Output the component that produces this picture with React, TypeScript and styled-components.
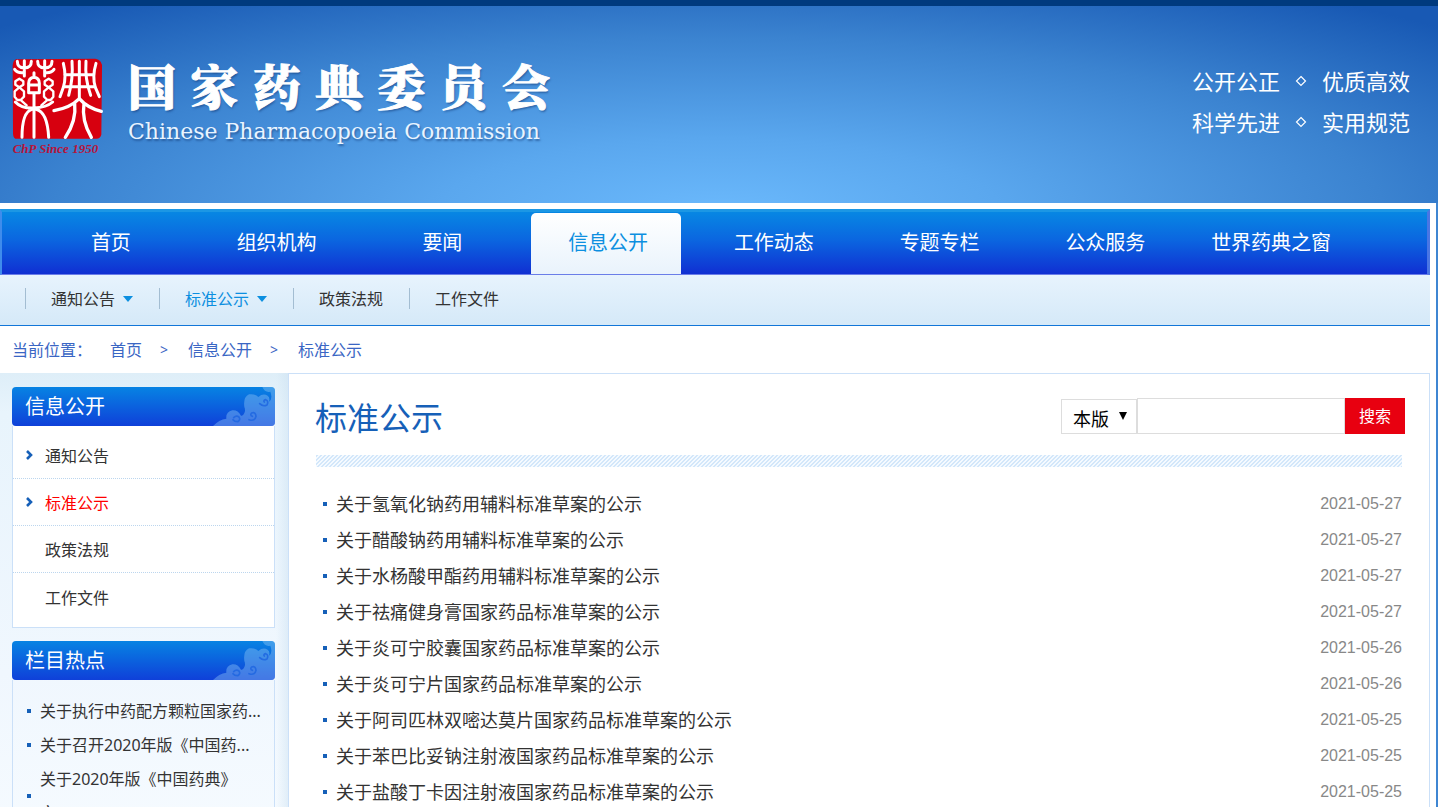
import React from "react";
import styled, { createGlobalStyle } from "styled-components";

const Global = createGlobalStyle`
  * { box-sizing: border-box; }
  body {
    margin: 0;
    height: 100vh;
    overflow: hidden;
    background: #3f86d2;
    color: #333;
    font: 16px/24px "Noto Sans", "Noto Sans CJK SC", sans-serif;
  }
  a { color: inherit; text-decoration: none; }
  ul, h1, h2, p { margin: 0; padding: 0; font-weight: 400; list-style: none; }
`;

const Banner = styled.header`
  display: flex;
  justify-content: space-between;
  align-items: center;
  height: 203px;
  padding: 0 28px 0 8px;
  border-top: 6px solid #003a7e;
  background: radial-gradient(ellipse 70% 135% at 50% 105%, #6bb9fc 0%, #5aa7ee 28%, #3b83d0 66%, #1859b4 100%);
`;

const Brand = styled.div`
  display: flex;
  align-items: flex-start;
  gap: 20px;
`;

const Names = styled.div`
  width: 422px;
  color: #fff;
  text-shadow: 1px 2px 2px rgba(20, 60, 120, 0.55);
`;

const SiteName = styled.h1`
  display: flex;
  justify-content: space-between;
  font: 900 48px/66px "Noto Serif CJK SC", "Noto Sans CJK SC", serif;
  -webkit-text-stroke: 1px #fff;
`;

const SiteNameEn = styled.p`
  font: 22px/28px "DejaVu Serif", serif;
  white-space: nowrap;
  color: #e9f4ff;
`;

const Slogans = styled.div`
  display: grid;
  grid-template-columns: auto auto auto;
  align-items: center;
  column-gap: 15px;
  margin-bottom: 6px;
  color: #fff;
  font-size: 22px;
  line-height: 41px;
`;

const Page = styled.div`
  min-height: 100vh;
  margin-right: 2px;
  padding: 6px 6px 0 0;
  background: #fff;
`;

const MainNav = styled.nav`
  display: grid;
  grid-template-columns: repeat(8, 1fr);
  height: 66px;
  padding: 0 75px 0 24px;
  border: solid;
  border-width: 3px 3px 1px 2px;
  border-color: #1c97e4 #4a76e4 #6a7de8 #3f8cec;
  background: linear-gradient(#0787e3, #0b66e0 45%, #102fd2);
`;

const NavLink = styled.a<{ $active?: boolean }>`
  justify-self: center;
  width: 150px;
  margin-top: 1px;
  padding-left: 4px;
  border-radius: 5px 5px 0 0;
  color: ${(p) => (p.$active ? "#0c8fe0" : "#fff")};
  background: ${(p) => (p.$active ? "linear-gradient(#fff, #e9f3fc)" : "none")};
  font-size: 20px;
  line-height: 60px;
  text-align: center;
`;

const SubNav = styled.nav`
  display: flex;
  align-items: center;
  height: 51px;
  padding: 0 0 3px 25px;
  border-bottom: 1px solid #1176d8;
  background: linear-gradient(#e7f3fd, #d5e9f8);
`;

const SubLink = styled.a<{ $active?: boolean }>`
  display: flex;
  align-items: center;
  gap: 8px;
  height: 21px;
  padding: 0 26px 0 25px;
  border-left: 1px solid #a3bdd2;
  color: ${(p) => (p.$active ? "#0c8fe0" : "#333")};
`;

const Crumbs = styled.nav`
  display: flex;
  gap: 18px;
  padding: 12px;
  height: 47px;
  color: #3a66c4;
`;

const CrumbMark = styled.span`
  width: 10px;
  font-size: 14px;
`;

const Columns = styled.div`
  display: flex;
`;

const Sidebar = styled.aside`
  display: flex;
  flex-direction: column;
  gap: 13px;
  width: 288px;
  padding: 14px 13px 0 12px;
  background: linear-gradient(to left, rgba(205, 226, 242, 0.5), rgba(230, 243, 252, 0) 12px),
    linear-gradient(#deeef8, #e8f4fc 40px, #f0f7fe 300px, #f6fbff);
`;

const PanelTitle = styled.h2`
  display: flex;
  justify-content: space-between;
  height: 39px;
  padding-left: 13px;
  overflow: hidden;
  border-radius: 4px;
  background: linear-gradient(#0783e3, #0f40d9);
  color: #fff;
  font-size: 20px;
  line-height: 39px;
`;

const Menu = styled.ul`
  padding: 6px 0 7px;
  border: 1px solid #cbe0f8;
  border-top: 0;
  background: #fff;
`;

const MenuItem = styled.li<{ $active?: boolean }>`
  display: flex;
  align-items: center;
  height: 47px;
  padding-left: 12px;
  border-bottom: 1px dotted #bcd6ee;
  color: ${(p) => (p.$active ? "#f00" : "#333")};
  a { padding-top: 2px; }
  &:last-child { border-bottom: 0; }
`;

const MenuMark = styled.span`
  display: flex;
  width: 20px;
`;

const HotList = styled.ul`
  padding: 14px 0;
  border: 1px solid #cbe0f8;
  border-top: 0;
`;

const HotItem = styled.li`
  display: flex;
  align-items: center;
  padding: 0 4px 0 14px;
  line-height: 34px;
  white-space: pre-line;
`;

const Dot = styled.span`
  flex: none;
  width: 4px;
  height: 4px;
  margin-right: 9px;
  background: #1660b8;
`;

const Content = styled.main`
  flex: 1;
  padding: 24px 24px 0 26px;
  border: 1px solid #cbe0f8;
  border-bottom: 0;
`;

const ContentHead = styled.div`
  display: flex;
  justify-content: space-between;
  align-items: center;
  height: 36px;
`;

const Title = styled.h1`
  padding-top: 4px;
  color: #1660b8;
  font-size: 32px;
  line-height: 36px;
`;

const Search = styled.form`
  display: flex;
  align-items: flex-end;
`;

const SelectBox = styled.label`
  position: relative;
  display: flex;
  svg { position: absolute; right: 10px; top: 13px; pointer-events: none; }
`;

const Select = styled.select`
  appearance: none;
  width: 76px;
  height: 35px;
  padding: 2px 0 0 11px;
  border: 1px solid #ddd;
  border-radius: 0;
  background: #fff;
  color: #000;
  font: 18px "Noto Sans CJK SC", sans-serif;
`;

const Query = styled.input`
  width: 208px;
  height: 36px;
  padding: 0 8px;
  border: 1px solid #ddd;
  background: #fff;
  font-size: 16px;
`;

const SearchButton = styled.button`
  width: 60px;
  height: 36px;
  padding: 0 0 2px;
  border: 0;
  background: #e80010;
  color: #fff;
  font: 16px "Noto Sans CJK SC", sans-serif;
`;

const Stripe = styled.div`
  height: 12px;
  margin: 21px 3px 19px 1px;
  background: linear-gradient(135deg, #d3e7fa 25%, #f5faff 25% 50%, #d3e7fa 50% 75%, #f5faff 75%) 0 0 / 4px 4px;
`;

const Notice = styled.li`
  display: flex;
  align-items: center;
  height: 36px;
  margin-right: 3px;
  padding-left: 8px;
  font-size: 18px;
`;

const NoticeDate = styled.time`
  margin-left: auto;
  color: #888;
  font: 16px/34px "Liberation Sans", sans-serif;
`;

const Seal = () => (
  <svg width="100" height="106" viewBox="0 0 300 318" role="img" aria-label="ChP">
    <path d="M24 22L262 20Q284 24 282 48L280 248Q276 262 262 260L22 260Q14 256 15 240L14 40Q16 24 24 22Z" fill="#d7000f" />
    <g fill="none" stroke="#fff" strokeWidth="9" strokeLinecap="round" strokeLinejoin="round">
      <path d="M49 26V72M28 28C28 42 36 48 49 48S70 42 70 28M110 26V72M89 28C89 42 97 48 110 48S132 42 132 28M20 52Q28 64 46 62M112 62Q130 64 138 52" />
      <path d="M78 62V76M62 122V94Q62 78 78 76Q94 78 94 94V122ZM62 99H94M78 122V256M22 150Q40 170 78 168T134 150M72 172Q42 180 42 256M84 172Q118 180 122 256" />
      <path d="M34 80L46 88V98L34 106L22 98V88ZM34 106L48 118V134L38 144H28L20 134V118ZM40 146L56 160" strokeWidth="7" />
      <path d="M122 80L134 88V98L122 106L110 98V88ZM122 106L136 118V134L128 144H118L108 134V118ZM116 146L100 160" strokeWidth="7" />
      <path d="M166 34Q176 74 166 106L156 134M192 28Q196 80 182 130M214 28V138M234 28Q230 80 248 130M264 34Q252 74 262 106L274 134M170 68H258M166 104H262" />
      <path d="M138 176Q186 168 214 140Q238 168 280 178M200 154Q206 206 172 256M228 154Q220 206 250 256" strokeWidth="10" />
    </g>
    <text x="14" y="302" fill="#b8143a" fontFamily="Liberation Serif" fontStyle="italic" fontWeight="700" fontSize="39">ChP Since 1950</text>
  </svg>
);

const Diamond = () => (
  <svg width="12" height="12" viewBox="0 0 12 12">
    <path d="M6 1.5L10.5 6L6 10.5L1.5 6Z" fill="none" stroke="#fff" strokeWidth="1.2" />
  </svg>
);

const Caret = () => (
  <svg width="10" height="6" viewBox="0 0 10 6">
    <path d="M0 0H10L5 6Z" fill="#0c8fe0" />
  </svg>
);

const Chevron = () => (
  <svg width="9" height="12" viewBox="0 0 9 12">
    <path d="M2 2L6 6L2 10" fill="none" stroke="#1660b8" strokeWidth="2.6" />
  </svg>
);

const Clouds = () => (
  <svg width="62" height="39" viewBox="0 0 186 117">
    <path
      d="M0 117Q18 98 40 95Q38 74 58 70Q74 68 84 86Q90 88 94 78Q98 70 94 60Q90 30 108 22Q128 20 136 30Q150 18 164 26Q172 32 168 44Q180 36 172 14Q156 18 148 0H186V117Z"
      fill="#8fc6f5"
      fillOpacity="0.42"
    />
    <g fill="none" stroke="#1f66e0" strokeWidth="5" strokeLinecap="round" strokeOpacity="0.85">
      <path d="M62 92Q70 84 78 90Q84 98 74 104Q64 104 60 98" />
      <path d="M108 98Q126 104 129 88Q128 74 116 78Q110 84 118 88" />
      <path d="M140 50Q150 60 162 54Q168 42 158 38Q150 40 154 45" />
    </g>
  </svg>
);

const nav = ["首页", "组织机构", "要闻", "信息公开", "工作动态", "专题专栏", "公众服务", "世界药典之窗"];
const sections = ["通知公告", "标准公示", "政策法规", "工作文件"];
const hot = ["关于执行中药配方颗粒国家药...", "关于召开2020年版《中国药...", "关于2020年版《中国药典》\n文..."];
const notices: [string, string][] = [
  ["关于氢氧化钠药用辅料标准草案的公示", "2021-05-27"],
  ["关于醋酸钠药用辅料标准草案的公示", "2021-05-27"],
  ["关于水杨酸甲酯药用辅料标准草案的公示", "2021-05-27"],
  ["关于祛痛健身膏国家药品标准草案的公示", "2021-05-27"],
  ["关于炎可宁胶囊国家药品标准草案的公示", "2021-05-26"],
  ["关于炎可宁片国家药品标准草案的公示", "2021-05-26"],
  ["关于阿司匹林双嘧达莫片国家药品标准草案的公示", "2021-05-25"],
  ["关于苯巴比妥钠注射液国家药品标准草案的公示", "2021-05-25"],
  ["关于盐酸丁卡因注射液国家药品标准草案的公示", "2021-05-25"],
];

export default function App() {
  return (
    <>
      <Global />
      <Banner>
        <Brand>
          <Seal />
          <Names>
            <SiteName>
              {[..."国家药典委员会"].map((c) => (
                <span key={c}>{c}</span>
              ))}
            </SiteName>
            <SiteNameEn>Chinese Pharmacopoeia Commission</SiteNameEn>
          </Names>
        </Brand>
        <Slogans>
          <span>公开公正</span>
          <Diamond />
          <span>优质高效</span>
          <span>科学先进</span>
          <Diamond />
          <span>实用规范</span>
        </Slogans>
      </Banner>
      <Page>
        <MainNav>
          {nav.map((label) => (
            <NavLink key={label} href="#" $active={label === "信息公开"}>
              {label}
            </NavLink>
          ))}
        </MainNav>
        <SubNav>
          {sections.map((label, i) => (
            <SubLink key={label} href="#" $active={i === 1}>
              {label}
              {i < 2 && <Caret />}
            </SubLink>
          ))}
        </SubNav>
        <Crumbs>
          <span>当前位置：</span>
          <a href="#">首页</a>
          <CrumbMark>&gt;</CrumbMark>
          <a href="#">信息公开</a>
          <CrumbMark>&gt;</CrumbMark>
          <a href="#">标准公示</a>
        </Crumbs>
        <Columns>
          <Sidebar>
            <section>
              <PanelTitle>
                信息公开
                <Clouds />
              </PanelTitle>
              <Menu>
                {sections.map((label, i) => (
                  <MenuItem key={label} $active={i === 1}>
                    <MenuMark>{i < 2 && <Chevron />}</MenuMark>
                    <a href="#">{label}</a>
                  </MenuItem>
                ))}
              </Menu>
            </section>
            <section>
              <PanelTitle>
                栏目热点
                <Clouds />
              </PanelTitle>
              <HotList>
                {hot.map((label) => (
                  <HotItem key={label}>
                    <Dot />
                    <a href="#">{label}</a>
                  </HotItem>
                ))}
              </HotList>
            </section>
          </Sidebar>
          <Content>
            <ContentHead>
              <Title>标准公示</Title>
              <Search>
                <SelectBox>
                  <Select aria-label="搜索范围">
                    <option>本版</option>
                  </Select>
                  <svg width="8" height="8" viewBox="0 0 8 8">
                    <path d="M0 0H8L4 8Z" />
                  </svg>
                </SelectBox>
                <Query type="text" aria-label="关键词" />
                <SearchButton type="button">搜索</SearchButton>
              </Search>
            </ContentHead>
            <Stripe />
            <ul>
              {notices.map(([title, date]) => (
                <Notice key={title}>
                  <Dot />
                  <a href="#">{title}</a>
                  <NoticeDate>{date}</NoticeDate>
                </Notice>
              ))}
            </ul>
          </Content>
        </Columns>
      </Page>
    </>
  );
}
